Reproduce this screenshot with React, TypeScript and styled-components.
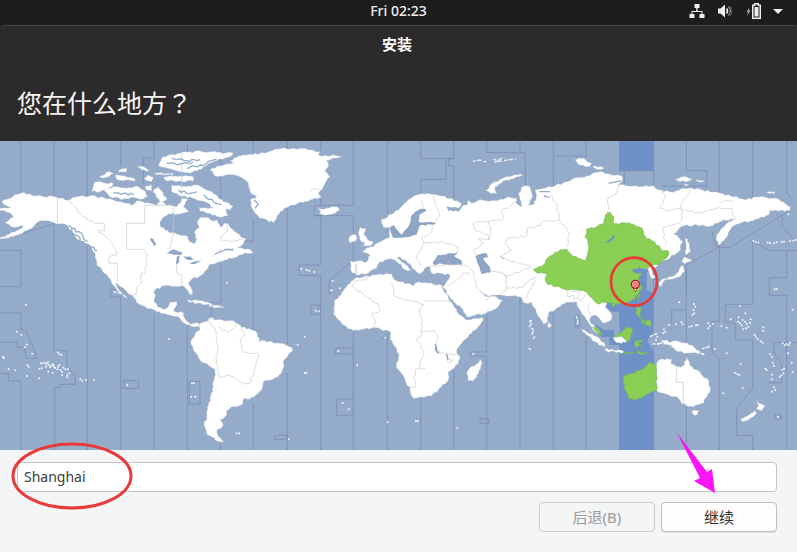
import React, { useState } from "react";
import styled, { createGlobalStyle } from "styled-components";

const GlobalStyle = createGlobalStyle`
  *, *::before, *::after { box-sizing: border-box; }
  body {
    margin: 0;
    background: #f4f5f7;
    color: #3d3d3d;
    font-family: "Noto Sans", "Noto Sans CJK SC", sans-serif;
  }
`;

const Screen = styled.div`
  display: flex;
  flex-direction: column;
  min-height: 100vh;
  overflow: hidden;
  background: #1d1d1d;
`;

const TopBar = styled.header`
  display: grid;
  grid-template-columns: 1fr auto 1fr;
  align-items: center;
  height: 25px;
  padding: 0 14px 3px;
  background: #1d1d1d;
`;

const Clock = styled.time`
  grid-column: 2;
  color: #eeeeec;
  font-size: 14px;
  font-weight: 500;
  line-height: 20px;
`;

const Tray = styled.div`
  display: flex;
  align-items: center;
  justify-content: flex-end;
  gap: 12px;
`;

const TrayButton = styled.button<{ $width: number }>`
  display: flex;
  width: ${(p) => p.$width}px;
  height: 16px;
  padding: 0;
  border: 0;
  background: none;
  color: #eeeeec;

  svg {
    width: 100%;
    height: 100%;
  }
`;

const InstallerWindow = styled.main`
  display: flex;
  flex: 1;
  flex-direction: column;
  border-radius: 4px 4px 0 0;
  background: #2c2a2b;
`;

const TitleBar = styled.div`
  padding: 8px 20px 11px 17px;
  border-top: 1px solid #454445;
  border-radius: 4px 4px 0 0;
  color: #ffffff;
  font-size: 15px;
  font-weight: 700;
  line-height: 20px;
  text-align: center;
`;

const Heading = styled.h1`
  margin: 0;
  padding: 18px 17px 20px;
  color: #f6f5f4;
  font-family: "Noto Sans CJK JP", "Noto Sans CJK SC", sans-serif;
  font-size: 25px;
  font-weight: 400;
  line-height: 38px;
`;

const MapFigure = styled.figure`
  margin: 0;
  background: #95abca;

  svg {
    display: block;
    width: 100%;
    height: auto;
  }
`;

const Footer = styled.form`
  position: relative;
  display: flex;
  flex: 1;
  flex-direction: column;
  gap: 10px;
  padding: 12px 20px 20px 17px;
  background: #f4f5f7;
`;

const CityInput = styled.input`
  width: 100%;
  height: 30px;
  padding: 0 7px 1px 6px;
  border: 1px solid #c4c4c4;
  border-radius: 4px;
  outline: none;
  background: #ffffff;
  color: #3d3d3d;
  font: 400 14px "Noto Sans", "Noto Sans CJK SC", sans-serif;
`;

const Actions = styled.div`
  display: flex;
  justify-content: flex-end;
  gap: 6px;
`;

const ActionButton = styled.button<{ $primary?: boolean }>`
  width: 116px;
  height: 30px;
  padding: 0 8px;
  border: 1px solid ${(p) => (p.$primary ? "#c0c0c0" : "#cbcccd")};
  border-radius: 4px;
  background: ${(p) => (p.$primary ? "#fdfdfd" : "#f4f5f7")};
  box-shadow: ${(p) => (p.$primary ? "0 1px 1px rgba(0, 0, 0, 0.08)" : "none")};
  color: ${(p) => (p.$primary ? "#333333" : "#9a9b9c")};
  font: 400 15px/20px "Noto Sans", "Noto Sans CJK SC", sans-serif;
`;

const InputCallout = styled.svg`
  position: absolute;
  top: -8px;
  left: 10px;
  width: 124px;
  height: 70px;
  pointer-events: none;
`;

const ArrowCallout = styled.svg`
  position: absolute;
  top: -18px;
  right: 80px;
  width: 42px;
  height: 64px;
  pointer-events: none;
`;

/* Turns a coarse outline into a ragged coast by subdividing its long edges. */
function coast(outline: string, closed = true, rough = 3): string {
  const pts = outline
    .trim()
    .split(/\s+/)
    .map((p) => p.split(",").map(Number));
  const count = closed ? pts.length : pts.length - 1;
  const out: string[] = [];
  for (let i = 0; i < count; i++) {
    const [ax, ay] = pts[i];
    const [bx, by] = pts[(i + 1) % pts.length];
    out.push(`${ax},${ay}`);
    const length = Math.hypot(bx - ax, by - ay);
    const steps = Math.floor(length / 7);
    for (let s = 1; s < steps; s++) {
      const t = s / steps;
      const wave = Math.sin((ax + bx) * 12.9 + (ay + by) * 7.2 + s * 78.2) * 43758.5;
      const shift = (wave - Math.floor(wave) - 0.5) * 2 * rough;
      const x = ax + (bx - ax) * t - ((by - ay) / length) * shift;
      const y = ay + (by - ay) * t + ((bx - ax) / length) * shift;
      out.push(`${x.toFixed(1)},${y.toFixed(1)}`);
    }
  }
  if (!closed) out.push(pts[pts.length - 1].join(","));
  return `M${out.join("L")}${closed ? "Z" : ""}`;
}

const LAND = [
  // North and Central America
  "5,185 30,175 45,163 65,158 110,167 165,170 178,175 205,180 225,172 270,167 300,172 335,178 380,190 395,196 410,182 450,190 470,196 482,182 500,196 530,200 545,175 565,178 550,200 567,215 540,222 505,222 485,238 480,255 495,270 515,278 540,285 562,288 568,305 582,312 590,298 583,278 598,262 592,245 602,232 622,232 640,243 652,240 662,262 672,250 683,250 690,262 705,275 722,290 738,296 730,312 712,322 750,328 758,340 735,338 718,345 710,352 675,360 650,368 632,372 618,390 600,408 575,418 566,428 576,450 578,462 570,465 560,448 548,438 520,440 500,436 465,450 462,480 472,500 490,508 505,500 510,487 530,485 526,502 520,512 550,518 556,538 572,553 596,550 602,558 590,560 560,555 540,535 510,525 470,515 430,498 410,488 400,470 375,450 350,432 357,450 382,474 372,472 350,450 335,430 322,405 290,375 285,340 272,318 235,300 200,255 165,250 130,242 112,247 98,262 60,282 20,295 0,297 0,293 50,272 70,258 40,262 15,245 40,232 30,218 0,212 0,205 32,202",
  // South America
  "598,552 615,545 635,532 645,540 700,542 725,562 755,570 772,580 778,605 795,602 840,610 875,622 878,632 852,660 850,685 835,710 790,725 785,750 750,778 732,775 725,795 695,800 680,812 680,825 660,840 670,855 650,875 655,890 672,905 645,900 615,880 612,855 620,830 625,795 640,740 645,690 625,675 600,660 572,612 585,580 600,570",
  // Greenland, Iceland
  "630,90 660,77 700,70 690,62 715,48 800,38 825,27 900,25 960,35 955,45 1028,48 980,62 985,80 975,95 990,110 978,125 970,140 955,160 965,170 930,180 875,195 840,215 820,248 780,235 760,210 750,180 770,170 750,155 745,130 720,110 680,105 645,108",
  "955,205 962,214 958,220 985,224 1005,220 1020,210 1012,200 990,203 980,205 970,208",
  // Arctic Canada
  "310,150 340,140 380,145 410,138 430,150 445,170 425,178 400,172 370,178 330,170 320,158",
  "275,155 285,125 310,128 340,130 330,142 300,155",
  "298,108 330,95 342,102 305,114",
  "345,106 375,108 405,116 404,124 370,122 350,118",
  "355,92 380,85 380,95 358,97",
  "410,78 438,85 448,92 425,89",
  "432,115 445,105 460,112 455,125 440,122",
  "475,75 490,50 540,40 600,33 700,40 690,50 650,62 610,80 605,88 570,100 540,95 520,90 490,82",
  "490,112 540,108 580,110 578,124 520,122 495,120",
  "462,98 520,99 518,106 470,105",
  "515,135 545,140 580,135 600,138 620,150 650,165 670,185 700,198 690,210 678,206 684,228 660,232 630,220 600,214 598,202 640,205 630,192 600,182 570,170 545,170 515,155",
  "475,140 490,160 500,180 480,185 468,170 460,150",
  "434,140 455,134 456,152 440,150",
  // Caribbean
  "560,480 600,482 638,492 632,498 600,488 570,488",
  "628,494 650,496 674,499 668,503 628,500",
  "562,448 572,456 577,464 568,458",
  // Europe and Asia
  "1145,238 1175,222 1200,205 1220,185 1250,165 1280,160 1310,165 1350,175 1385,190 1380,202 1340,200 1345,212 1375,215 1390,195 1402,195 1405,180 1415,190 1440,178 1475,182 1510,178 1525,170 1550,175 1548,190 1566,200 1555,160 1570,138 1590,140 1597,165 1585,195 1602,193 1610,165 1605,150 1630,145 1660,140 1690,128 1720,115 1760,108 1800,95 1831,103 1866,108 1866,125 1856,135 1901,138 1961,137 1976,150 2021,157 2051,145 2101,148 2161,160 2201,170 2231,178 2291,170 2336,178 2371,200 2369,213 2341,212 2311,210 2306,225 2251,243 2221,250 2196,260 2176,295 2156,315 2149,290 2166,265 2201,238 2171,240 2131,258 2091,255 2046,258 2021,282 2036,292 2049,305 2036,335 1996,360 1975,374 1952,388 1968,412 1956,416 1946,394 1931,385 1896,392 1870,470 1821,485 1816,500 1836,525 1831,542 1808,550 1800,538 1785,525 1772,530 1770,545 1785,560 1802,580 1790,578 1768,552 1755,530 1740,510 1730,485 1700,487 1680,500 1645,520 1640,548 1630,553 1605,505 1595,487 1575,490 1560,470 1500,465 1460,466 1435,452 1428,440 1445,458 1460,470 1480,468 1508,482 1490,505 1450,522 1400,530 1385,505 1350,475 1328,440 1338,428 1350,405 1295,400 1290,380 1275,383 1260,402 1245,390 1230,372 1200,350 1190,354 1212,370 1234,390 1222,392 1195,370 1178,358 1140,365 1130,385 1105,400 1070,405 1055,398 1050,362 1100,365 1110,345 1085,333 1120,320 1150,300 1170,290 1166,262 1150,262",
  // British Isles
  "1080,262 1097,265 1092,280 1103,300 1120,305 1115,315 1083,320 1095,308 1080,300 1075,280",
  "1045,300 1050,288 1070,285 1068,302 1050,308",
  // Arctic Russia
  "1458,152 1470,135 1500,118 1560,102 1570,106 1510,122 1485,140 1490,160 1470,160",
  "1720,58 1750,55 1762,66 1775,70 1768,80 1740,76",
  "1778,80 1808,80 1810,87 1790,88",
  "2026,118 2045,110 2078,115 2070,122 2035,124",
  "2088,118 2112,122 2110,125 2090,122",
  "2045,133 2066,136 2058,138",
  "2300,158 2325,155 2322,162",
  // Africa, Madagascar, Sri Lanka
  "1070,412 1130,404 1175,402 1185,420 1200,425 1240,437 1255,425 1285,430 1325,435 1332,455 1360,495 1380,525 1400,540 1450,535 1440,555 1415,580 1380,615 1370,635 1380,655 1375,672 1345,695 1345,720 1325,740 1295,768 1240,775 1230,750 1215,720 1200,695 1190,685 1197,645 1190,625 1170,597 1172,577 1130,563 1060,572 1030,555 1000,522 1002,485 1040,440 1060,420",
  "1440,658 1446,672 1436,700 1420,724 1403,722 1400,700 1412,680 1430,672",
  "1646,545 1655,556 1648,564 1642,558",
  // Sakhalin and Japan
  "2056,295 2063,297 2068,325 2072,332 2060,345 2055,340 2058,310",
  "2053,350 2076,362 2055,371 2045,365",
  "2049,376 2053,395 2035,412 1995,420 1978,432 1983,420 2010,410 2030,400 2042,380",
  "1976,425 1988,427 1980,440",
  // Indonesia and New Guinea
  "1745,568 1775,582 1791,590 1816,615 1812,622 1785,605 1760,585",
  "1814,626 1871,634 1870,638 1820,634",
  "1839,593 1866,588 1880,596 1878,608 1850,608",
  "1981,600 2000,600 2010,608 2030,602 2076,615 2090,630 2115,645 2080,638 2060,640 2035,635 2010,615 1990,608",
  "2104,624 2122,620 2130,614 2126,624 2108,628",
  // Eastern Australia, Tasmania, New Zealand
  "1969,672 1981,658 2016,658 2012,670 2041,682 2053,675 2059,650 2069,675 2091,690 2126,720 2131,750 2111,790 2081,800 2046,792 2035,775 2030,770 2021,770 2006,765 1981,758 1969,752",
  "2076,812 2096,812 2091,825 2083,826",
  "2268,778 2275,788 2296,797 2285,812 2270,808 2275,796",
  "2265,812 2270,820 2245,840 2228,845 2221,838 2250,822",
];

const HIGHLIGHTED = [
  // China and the neighbouring zone
  "1600,388 1630,375 1645,352 1680,330 1700,328 1720,350 1755,362 1765,330 1762,298 1755,290 1760,268 1790,260 1811,252 1816,225 1831,217 1841,230 1841,252 1886,248 1926,265 1936,290 1976,317 1986,333 2006,333 2003,350 1981,370 1950,380 1931,386 1896,392 1910,400 1928,396 1916,418 1926,440 1915,462 1901,478 1880,490 1851,493 1825,488 1805,485 1800,492 1785,485 1770,470 1758,455 1735,450 1700,450 1640,430 1635,415 1640,400 1610,398",
  // Western Australia
  "1869,710 1896,700 1921,690 1951,668 1969,675 1969,752 1941,762 1916,775 1886,778 1882,760 1876,750",
  // Borneo, Malaysia, Sulawesi, Philippines, Taiwan
  "1841,590 1860,580 1886,562 1899,572 1892,590 1886,606 1878,600 1866,588",
  "1778,560 1791,565 1805,584 1795,584",
  "1906,602 1930,598 1925,605 1912,608 1928,620 1915,616 1908,625 1904,612",
  "1909,500 1922,505 1918,522 1928,535 1912,526",
  "1936,542 1950,540 1952,560 1935,556",
  "1924,535 1934,544 1928,552",
  "1912,468 1921,464 1916,480",
  "1834,492 1846,492 1840,502",
  "1872,636 1900,637 1898,641 1874,640",
  "1908,636 1946,638 1930,644",
];

const SEAS = [
  // Baltic
  "1168,264 1182,256 1192,270 1205,284 1218,268 1230,250 1232,232 1245,215 1265,206 1280,210 1258,225 1255,245 1310,248 1300,254 1260,256 1250,284 1230,290 1200,293 1178,292",
  // Black, Azov and Caspian seas
  "1298,368 1312,345 1330,344 1345,340 1372,338 1362,348 1385,362 1386,374 1350,376 1320,370 1302,375",
  "1426,350 1440,342 1460,340 1464,350 1450,354 1462,372 1470,382 1470,398 1445,402 1438,380",
  // Great Lakes and Winnipeg
  "500,341 520,328 545,336 546,344 515,342",
  "530,350 540,346 536,370 528,372",
  "550,348 572,350 580,358 564,360",
  "568,370 592,364 604,360 590,370",
  "450,294 460,296 468,316 462,318",
  // African rift lakes, Aral
  "1304,612 1308,612 1312,632 1318,640 1314,642 1304,628",
  "1338,640 1342,642 1346,660 1342,662",
  "1504,352 1512,354 1508,358",
];

/* Waters that belong to the selected time zone: Baikal and Bohai. */
const ZONE_SEAS = [
  "1815,309 1835,292 1843,284 1844,290 1828,306",
  "1896,390 1918,382 1928,388 1945,388 1946,394 1926,400 1910,400",
];

/* Political boundaries drawn over the land. */
const BORDERS = [
  "205,180 230,208 262,240 285,250",
  "295,272 320,290 342,325 350,345 328,350 326,370",
  "434,335 442,345 440,370 434,398 424,400 422,430 412,440 410,462 398,465",
  "520,278 515,300 508,330",
  "530,372 532,400 545,405 545,440",
  "680,250 682,275 662,290 664,302 700,304 728,298",
  "635,350 660,330 700,325",
  "622,540 640,560 650,580 652,640 648,670 660,712 690,706 730,732 750,730 765,690 775,642 730,636 720,600 735,582 722,562",
  "655,560 680,575 700,568 712,548",
  "930,155 945,145 962,150",
  "1265,180 1270,200 1262,210",
  "1300,168 1305,190 1318,225 1302,250 1296,275 1265,292 1272,310 1260,330 1250,350 1262,380",
  "1272,308 1330,306 1375,320 1368,340",
  "1548,185 1530,200 1508,210 1508,240 1455,244 1430,244 1420,250 1425,272 1465,285 1468,298 1435,296 1450,310 1420,330 1430,345",
  "1465,245 1472,270 1468,300",
  "1650,165 1670,190 1678,240 1625,246 1620,258 1580,265 1580,288 1520,296 1515,310 1534,330 1500,350 1530,362 1560,372 1595,380",
  "1678,240 1700,262 1708,290 1700,320",
  "1290,380 1350,372 1395,375 1420,395 1425,425 1430,440",
  "1342,440 1372,418 1395,398 1410,400",
  "1470,395 1510,400 1520,410 1550,398 1590,382",
  "1515,402 1520,450 1500,462",
  "1520,445 1570,442 1590,418 1610,412",
  "1580,478 1590,450 1608,420",
  "1700,450 1702,470 1720,465 1722,482",
  "1715,455 1740,455 1730,475 1745,485 1765,455",
  "1770,490 1764,510 1775,530",
  "1856,135 1850,158 1825,172 1825,220",
  "1981,150 1995,165 1990,190 1981,205 2000,215 2030,205 2045,210 2100,218 2150,205 2195,205 2205,240",
  "2070,145 2060,170 2045,190 2045,240 2030,252 1990,262 1990,295 2000,310",
  "2161,188 2180,182 2200,182",
  "1060,430 1055,440 1135,492 1140,512 1115,522 1125,540 1122,562",
  "1100,408 1100,420 1060,425",
  "1175,430 1180,465 1200,475 1270,492 1258,515 1268,540 1262,590 1250,595 1272,640 1262,660 1258,680 1245,690 1245,742 1230,742",
  "1262,575 1300,570 1315,590 1305,620 1320,640 1372,642",
  "1275,483 1355,483",
  "1456,480 1478,470",
  "1340,655 1360,660 1345,668",
  "1255,686 1275,686",
];

const STRAIGHT_BORDERS =
  "M172,170V250M285,250H313V272H295M326,370H352V435M434,196V250H380V328H434M434,196H520V275M545,40V175M2029,676V727H2050V794M2012,628V612M1070,370V400M1065,372L1068,400";

const ZONE_LINES = [
  "M62,3V157M0,331H62V440H0M0,519H62V568L78,572L112,655H80L72,622H52V607H0",
  "M162,3V172M162,250V632H200V678L226,710V733H182V742H164V930",
  "M262,3V168M262,310V930M0,700H25V723H62V930",
  "M362,3V78M335,448H352M332,446V471H362V930",
  "M462,3V54H430V132M462,522V930M562,12V50M562,555V930",
  "M370,722H415V745H370ZM568,725H600V792H568Z",
  "M662,3V178M600,488H662M662,370V486M662,908V930M634,500V532",
  "M760,3V38M760,240V304H738M760,345V570M760,790V930",
  "M862,3V28M862,205V612M862,698V930M824,886H862V898H824Z",
  "M962,3V32M962,176V196M943,196H1060V3M943,196V227H962V375H897V406H962V930",
  "M932,495H960V523H932Z M1005,624H1060M1005,624V642H1060",
  "M1060,227V360L988,422V462M943,227H1060M1060,575V930M1010,777H1060M1010,777V826H1060",
  "M1162,3V222M1162,580V930M1145,595H1172",
  "M1262,3V56H1361M1262,160V118H1338V60M1361,3V56H1346V78H1361V174M1262,776V930",
  "M1361,690V930M1460,3V38H1576V140M1560,3V38M1460,524V636H1410V648H1460V930",
  "M1440,836H1466V850H1440Z M1560,470V930M1660,3V138M1660,48H1758M1660,515V930",
  "M1758,3V50M1758,590V930M1873,92V130M1725,525H1738V560H1725Z",
  "M1859,3V92H1961V3M1859,515V560M1859,615V930M1961,92V137M1961,615V930",
  "M2059,3V92H2120V138H1988M2059,290V450M2059,375L2158,320",
  "M2158,3V160M2136,275L2146,315L2158,322H2190L2336,232L2369,213",
  "M2059,800V930M2258,3V172M2250,300L2310,332H2391M2258,305V493H2176V545L2206,550V600H2258V745L2210,805V886H2258V930",
  "M2158,320V544H2136V635L2158,655V930M2360,3V162L2380,180M2348,232L2345,260L2380,296",
  "M2360,335V413H2308V466H2360V930M2308,460V466M2015,510H2059M2015,510V550",
  "M2059,390V650M2322,608H2391M2322,608V640L2345,670V728H2308",
  "M1961,300V450M60,282L168,250M2324,824H2342V838H2324Z",
];

/* Islets: x, y pairs. */
const ISLETS =
  "78,495 50,575 64,585 74,622 80,614 97,641 8,650 12,654 26,687 46,691 82,675 86,680 81,708 117,715 122,670 128,670 135,668 140,672 138,680 144,666 147,674 150,682 154,678 158,673 163,682 160,676 145,695 158,698 165,684 172,688 174,680 178,675 182,690 186,696 190,683 186,706 196,688 204,688 208,700 202,706 202,712 173,637 178,642 184,645 118,686 125,685 241,717 247,722 258,720 282,721 382,735 576,729 582,730 574,770 586,770 507,597 681,428 904,386 920,390 928,392 943,396 914,590 893,615 914,699 919,698 1015,634 1072,676 1028,789 1046,808 998,423 1020,445 866,898 710,880 718,880 1156,593 1163,847 1248,843 1254,843 1372,864 1281,618 1420,642 1281,702 1294,698 2324,448 2330,447 2260,303 2267,306 2275,308 2303,308 2310,309 2322,310 2330,307 2345,306 2352,305 2370,303 2380,302 2388,300 2365,223 2038,487 2082,492 2086,500 2080,510 2083,520 2078,524 2006,555 2028,553 2044,546 2048,552 2068,560 2075,558 2088,556 2094,555 1992,568 1996,575 1990,580 2125,550 2130,558 2125,565 2138,552 2164,558 2180,563 2220,497 2236,520 2192,538 2214,545 2220,550 2228,540 2235,545 2225,556 2240,552 2245,560 2250,548 2238,565 2230,568 2252,538 2216,532 2290,562 2290,572 2264,585 2268,592 2274,598 2282,604 2288,608 2144,626 2180,640 2222,672 2378,509 2348,610 2360,612 2366,616 2370,608 2354,616 2310,642 2316,650 2318,668 2296,686 2300,690 2316,704 2315,718 2322,678 2346,690 2350,700 2344,706 2352,686 2340,710 2364,640 2378,695 2375,668 2205,698 2212,702 2218,705 2170,760 2228,744 2322,742 2326,750 2316,755 2334,830 1972,590 1968,600 1974,612 1984,610";

const ISLET_POINTS = ISLETS.split(" ").map((p) => p.split(",").map(Number));

function WorldMap() {
  return (
    <svg viewBox="0 3 2391 927" role="img" aria-label="时区地图">
      <rect y="3" width="2391" height="927" fill="#95abca" />
      <g fill="#6e92c7">
        <path d="M1859,3H1961V92H1859Z" />
        <path d="M1896,386H1940V450L1961,458V574L1942,602L1961,635V930H1859V515H1836L1816,500L1821,485L1870,470Z" />
        <path d="M1764,550L1790,555L1811,570H1842V590H1860V615H1828V590L1806,592Z" />
      </g>
      <g fill="none" stroke="#7488ae" strokeWidth="2">
        {ZONE_LINES.map((d) => (
          <path key={d} d={d} />
        ))}
      </g>
      <g fill="#ffffff" stroke="#b9c2d2" strokeWidth="1">
        {LAND.map((d) => (
          <path key={d} d={coast(d)} />
        ))}
      </g>
      <g fill="#8ace54" stroke="#7db858" strokeWidth="2">
        {HIGHLIGHTED.map((d) => (
          <path key={d} d={coast(d)} />
        ))}
      </g>
      <g fill="#8ea5c6">
        {SEAS.map((d) => (
          <path key={d} d={coast(d, true, 2)} />
        ))}
      </g>
      <g fill="#6e92c7">
        {ZONE_SEAS.map((d) => (
          <path key={d} d={coast(d, true, 2)} />
        ))}
      </g>
      <g fill="none" stroke="#c9c9c9" strokeWidth="2">
        {BORDERS.map((d) => (
          <path key={d} d={coast(d, false)} />
        ))}
        <path d={STRAIGHT_BORDERS} />
      </g>
      {/* fjords, straits and inlets */}
      <g fill="none" stroke="#95abca" strokeWidth="4">
        <path d={coast("205,256 225,285 250,305 292,332", false, 5)} />
        <path d={coast("215,265 238,275 262,305", false, 5)} />
        <path d="M348,432L365,450L400,480" />
        <path d={coast("515,55 560,62 600,58", false, 4)} />
        <path d={coast("500,70 540,72 580,66", false, 4)} />
        <path d={coast("560,85 600,75 650,58", false, 4)} />
        <path d={coast("340,158 370,160 400,165", false, 4)} />
        <path d={coast("535,150 560,160 590,155", false, 4)} />
        <path d={coast("610,165 640,185 665,195", false, 4)} />
        <path d="M645,342L680,328L700,330M612,858L620,885L645,897M762,180L775,192L765,205" />
        <path d="M1618,155L1650,155M1632,168L1648,172M1826,130L1864,122" />
      </g>
      {/* Svalbard, Laccadives and other island chains */}
      <g fill="none" stroke="#eef2f7" strokeWidth="4" strokeDasharray="9 4 14 6">
        <path d="M1418,64L1440,60L1460,66M1480,58L1500,64L1520,60L1548,57M1484,68L1506,54" />
        <path d="M1588,540L1596,550L1588,560L1602,570L1596,580L1604,590L1598,600M1594,540L1588,550M1586,624L1592,630" />
        <path d="M1728,528L1734,540L1732,556M944,510L952,516L960,512M990,450L1000,452" />
        <path d="M1958,612L1990,610L2010,614M1950,590L1972,580M340,455L365,460L382,474" />
      </g>
      <g fill="#f3f6fa">
        {ISLET_POINTS.map(([x, y]) => (
          <circle key={`${x}-${y}`} cx={x} cy={y} r="3" />
        ))}
      </g>
      {/* selected city */}
      <path d="M1899,440L1906,456L1913,440Z" fill="#ffffff" stroke="#8c2424" strokeWidth="2" />
      <circle cx="1906" cy="433" r="12" fill="#f7b0ab" stroke="#a82020" strokeWidth="4" />
      <circle cx="1906" cy="433" r="6" fill="#f08a84" stroke="#e2544e" strokeWidth="2" />
      <ellipse cx="1902" cy="425" rx="69" ry="72" fill="none" stroke="#e83a38" strokeWidth="8" />
    </svg>
  );
}

export default function App() {
  const [city, setCity] = useState("Shanghai");
  return (
    <Screen>
      <GlobalStyle />
      <TopBar>
        <Clock>Fri 02:23</Clock>
        <Tray>
          <TrayButton type="button" aria-label="网络" $width={16}>
            <svg viewBox="0 0 16 16" fill="currentColor">
              <path d="M5.500 1h5v4H8.700v3H13.500v3H15.500v4h-5v-4h2V9h-9v2h2v4h-5v-4h2V8H7.300V5H5.500z" />
            </svg>
          </TrayButton>
          <TrayButton type="button" aria-label="音量" $width={16}>
            <svg viewBox="0 0 16 16" fill="none">
              <path d="M1 5.500h2.500L8 1.500v13l-4.500-4H1z" fill="currentColor" />
              <path d="M9.500 5.500q2 2.500 0 5" stroke="currentColor" strokeWidth="1.500" />
              <path d="M11.500 3.500q3.500 4.500 0 9" stroke="#8a8a88" strokeWidth="1.300" />
              <path d="M13.500 3q2.800 5 0 10" stroke="#5c5c5a" />
            </svg>
          </TrayButton>
          <TrayButton type="button" aria-label="电池" $width={16}>
            <svg viewBox="0 0 16 16" fill="none">
              <path d="M4.500 4L1.500 9H3l-.8 4L5.500 7.500H3.800z" fill="#a5a5a3" />
              <path d="M7.750 2.250h2V.8h3.500v1.450h2v13h-7.500z" stroke="currentColor" strokeWidth="1.500" />
              <path d="M9.500 4h4v9.500h-4z" fill="currentColor" />
            </svg>
          </TrayButton>
          <TrayButton type="button" aria-label="系统菜单" $width={10}>
            <svg viewBox="0 0 10 16" fill="currentColor">
              <path d="M0 6h10l-5 5z" />
            </svg>
          </TrayButton>
        </Tray>
      </TopBar>
      <InstallerWindow>
        <TitleBar>安装</TitleBar>
        <Heading>您在什么地方？</Heading>
        <MapFigure>
          <WorldMap />
        </MapFigure>
        <Footer onSubmit={(e: React.FormEvent) => e.preventDefault()}>
          <CityInput
            aria-label="城市"
            value={city}
            onChange={(e: React.ChangeEvent<HTMLInputElement>) => setCity(e.target.value)}
          />
          <Actions>
            <ActionButton type="button" disabled>
              后退(B)
            </ActionButton>
            <ActionButton type="submit" $primary>
              继续
            </ActionButton>
          </Actions>
          <InputCallout viewBox="0 0 124 70" aria-hidden="true">
            <ellipse cx="62" cy="34" rx="59" ry="32" fill="none" stroke="#e83a38" strokeWidth="3" />
          </InputCallout>
          <ArrowCallout viewBox="0 0 42 64" aria-hidden="true">
            <path d="M2 1L32 40L37 37L40 61L19 49L25 46Z" fill="#fb14f5" />
          </ArrowCallout>
        </Footer>
      </InstallerWindow>
    </Screen>
  );
}
